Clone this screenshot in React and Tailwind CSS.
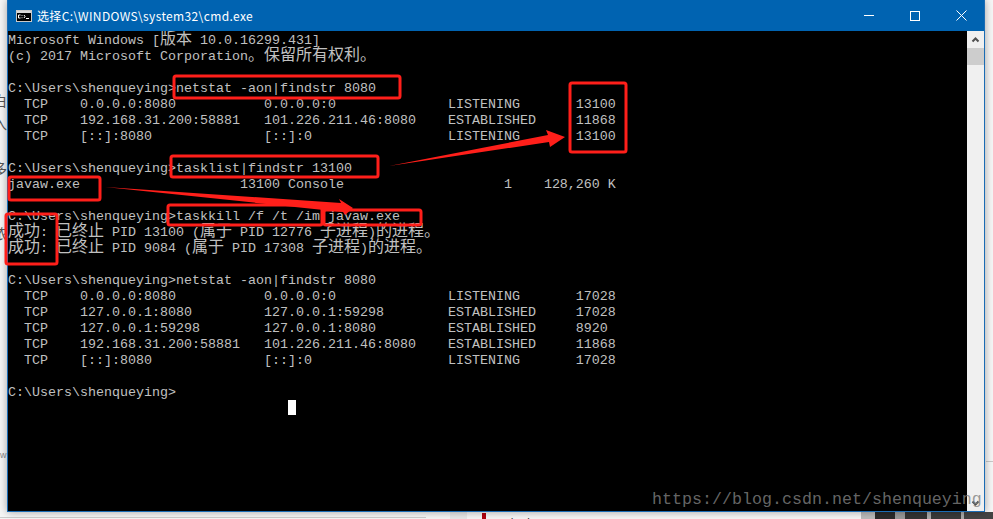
import React from "react";

const C = ({ children }) => <span className="text-[16px] leading-[0]">{children}</span>;

const lines = [
  <>Microsoft Windows [<C>版本</C> 10.0.16299.431]</>,
  <>(c) 2017 Microsoft Corporation<C>。保留所有权利。</C></>,
  "",
  "C:\\Users\\shenqueying>netstat -aon|findstr 8080",
  "  TCP    0.0.0.0:8080           0.0.0.0:0              LISTENING       13100",
  "  TCP    192.168.31.200:58881   101.226.211.46:8080    ESTABLISHED     11868",
  "  TCP    [::]:8080              [::]:0                 LISTENING       13100",
  "",
  "C:\\Users\\shenqueying>tasklist|findstr 13100",
  "javaw.exe                    13100 Console                    1    128,260 K",
  "",
  "C:\\Users\\shenqueying>taskkill /f /t /im javaw.exe",
  <><C>成功</C>: <C>已终止</C> PID 13100 (<C>属于</C> PID 12776 <C>子进程</C>)<C>的进程。</C></>,
  <><C>成功</C>: <C>已终止</C> PID 9084 (<C>属于</C> PID 17308 <C>子进程</C>)<C>的进程。</C></>,
  "",
  "C:\\Users\\shenqueying>netstat -aon|findstr 8080",
  "  TCP    0.0.0.0:8080           0.0.0.0:0              LISTENING       17028",
  "  TCP    127.0.0.1:8080         127.0.0.1:59298        ESTABLISHED     17028",
  "  TCP    127.0.0.1:59298        127.0.0.1:8080         ESTABLISHED     8920",
  "  TCP    192.168.31.200:58881   101.226.211.46:8080    ESTABLISHED     11868",
  "  TCP    [::]:8080              [::]:0                 LISTENING       17028",
  "",
  "C:\\Users\\shenqueying>",
];

const rects = [
  [174, 76, 226, 22],
  [570, 83, 56, 69],
  [171, 156, 207, 21],
  [9, 177, 91, 23],
  [168, 205, 154, 20],
  [324, 210, 97, 15],
  [6, 214, 51, 50],
];

const imageBits = [
  ["w-[14px]", "bg-[#bbbbbb]"],
  ["w-[20px]", "bg-[#2a2a2a]"],
  ["w-[10px]", "bg-[#999999]"],
  ["w-[22px]", "bg-[#333333]"],
  ["w-[4px]", "bg-[#aaaaaa]"],
  ["w-[30px]", "bg-[#3a3a3a]"],
  ["w-[3px]", "bg-[#aaaaaa]"],
  ["w-[29px]", "bg-[#444444]"],
];

export default function App() {
  return (
    <div className="relative h-[519px] w-[993px] overflow-hidden bg-[#f6f6f6]">
      {/* page showing at the left edge, clipped by the window */}
      <div className="absolute left-0 top-0 h-[519px] w-[7px] overflow-hidden text-[14px] leading-none text-[#555] font-['Noto_Sans_CJK_SC',sans-serif]">
        <div className="absolute left-[-7px] top-[93px]">白</div>
        <div className="absolute left-[-7px] top-[116px]">入</div>
        <div className="absolute left-[-7px] top-[161px]">多</div>
        <div className="absolute left-[-7px] top-[226px]">浓</div>
        <div className="absolute left-0 top-[451px] text-[9px] text-[#888] font-['Liberation_Sans',sans-serif]">w</div>
      </div>

      {/* page showing along the bottom edge */}
      <div className="absolute left-0 top-[517px] h-px w-[426px] bg-[#cccccc]" />
      <div className="absolute left-[450px] top-[511px] h-2 w-[17px] bg-[#e8e8e8]" />
      <div className="absolute left-[482px] top-[513px] h-[6px] w-[4px] bg-[#b0000f]" />
      <div className="absolute left-[496px] top-[517px] h-[2px] overflow-hidden text-[13px] leading-[13px] text-[#333] font-['Noto_Sans_CJK_SC',sans-serif]">目标大</div>
      <div className="absolute left-[861px] top-[512px] flex h-[7px] w-[132px]">
        {imageBits.map(([w, c], i) => (
          <div key={i} className={`h-full ${w} ${c}`} />
        ))}
      </div>
      <div className="absolute left-[986px] top-[461px] h-px w-[7px] bg-[#c8c8c8]" />

      {/* console window */}
      <div className="relative ml-[7px] flex h-[512px] w-[978px] flex-col border-x border-b border-[#1a6cb5] shadow-[0_0_8px_rgba(0,0,0,0.35)]">
        <div className="flex h-[31px] shrink-0 items-center bg-[#0063b1] pl-[8px] text-white">
          <svg width="16" height="12" viewBox="0 0 16 12" className="shrink-0">
            <rect x="0.5" y="0.5" width="15" height="11" fill="#000" stroke="#c8c8c8" />
            <rect x="1" y="1" width="14" height="2" fill="#d8d8d8" />
            <path d="M2.5 5h2M2.5 8h2M2.5 5v3M6 5v.8M6 7.4v.8M8 5l1 1.5L8 8M10 8.5h3" stroke="#fff" fill="none" strokeWidth="1" />
          </svg>
          <span className="ml-[5px] text-[12px] leading-none tracking-[0.36px] font-['Noto_Sans_CJK_SC',sans-serif]">选择C:\WINDOWS\system32\cmd.exe</span>
          <div className="ml-auto flex h-full items-center">
            <div className="flex w-[46px] justify-center"><div className="h-px w-[10px] bg-white" /></div>
            <div className="flex w-[46px] justify-center"><div className="h-[10px] w-[10px] border border-white" /></div>
            <div className="flex w-[46px] justify-center">
              <svg width="11" height="11" viewBox="0 0 11 11"><path d="M0.5 0.5l10 10M10.5 0.5l-10 10" stroke="#fff" strokeWidth="1" /></svg>
            </div>
          </div>
        </div>
        <div className="flex min-h-0 flex-1">
          <div className="flex-1 overflow-hidden whitespace-pre bg-black pt-[2px] text-[13.33px] leading-[16px] text-[#c0c0c0] font-['Liberation_Mono','Noto_Sans_CJK_SC',monospace]">
            {lines.map((l, i) => (
              <div key={i} className="h-4">{l}</div>
            ))}
            <div className="flex h-4 pl-[280px]"><div className="h-[15px] w-2 -translate-y-[1px] bg-white" /></div>
          </div>
          <div className="flex w-[17px] shrink-0 flex-col items-center bg-[#f0f0f0]">
            <svg width="17" height="17" viewBox="0 0 17 17"><path d="M5.5 10.5l3-3 3 3" stroke="#505050" strokeWidth="2" fill="none" /></svg>
            <div className="h-[17px] w-[17px] bg-[#cdcdcd]" />
            <div className="flex-1" />
            <svg width="17" height="17" viewBox="0 0 17 17"><path d="M5.5 7.5l3 3 3-3" stroke="#505050" strokeWidth="2" fill="none" /></svg>
          </div>
        </div>
      </div>

      {/* red annotations */}
      <svg width="993" height="519" className="pointer-events-none absolute left-0 top-0">
        {rects.map(([x, y, w, h], i) => (
          <rect key={i} x={x} y={y} width={w} height={h} rx="2" fill="none" stroke="#ff1f1a" strokeWidth="3" />
        ))}
        <polygon points="389,166 548,135 546,130 565,137 550,147 549,142" fill="#ff1f1a" />
        <polygon points="105,187 341,203 339,199 353,208 345,215 343,212" fill="#ff1f1a" />
      </svg>

      {/* watermark */}
      <div className="absolute left-[652px] top-[490px] whitespace-pre text-[16.67px] leading-[20px] text-[#808080]/80 font-['Liberation_Mono',monospace]">https://blog.csdn.net/shenqueying</div>
    </div>
  );
}
